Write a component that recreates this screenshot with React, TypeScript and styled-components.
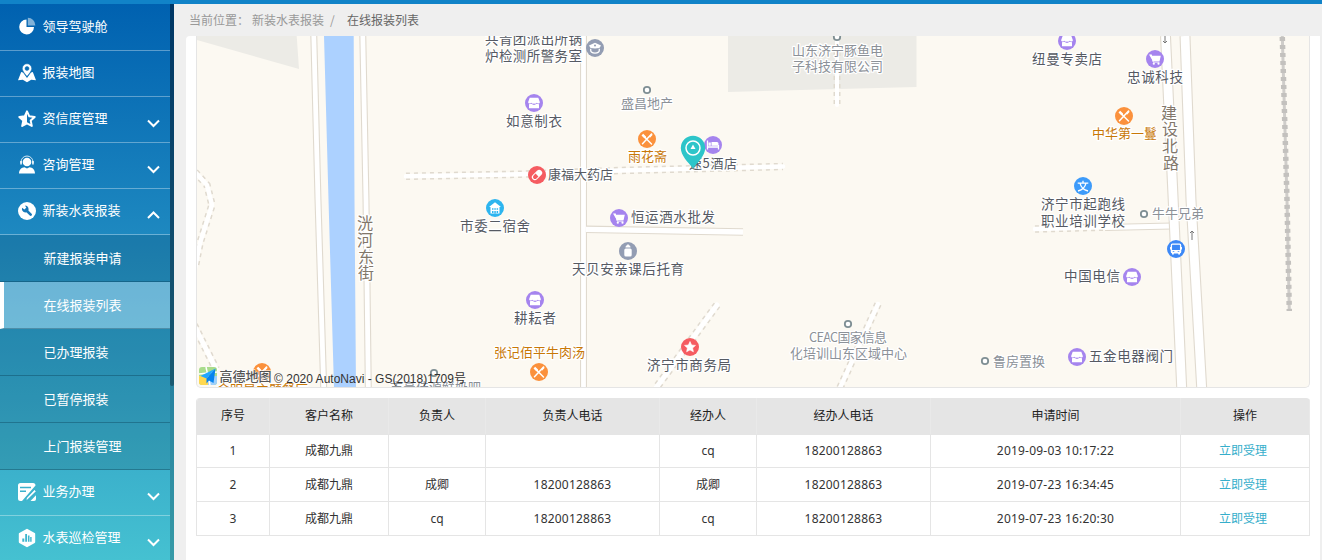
import React from 'react';
import styled, { createGlobalStyle, css } from 'styled-components';

const GlobalStyle = createGlobalStyle`
  * { box-sizing: border-box; }
  body {
    margin: 0;
    overflow: hidden;
    background: #efefef;
    font-family: "Noto Sans", "Noto Sans CJK SC", sans-serif;
    font-size: 12px;
    color: #333;
  }
`;

const Page = styled.div`
  display: flex;
  flex-direction: column;
  height: 560px;
  overflow: hidden;
`;
const TopBar = styled.div`
  flex: none;
  height: 4px;
  background: #1183c8;
`;
const Body = styled.div`
  flex: 1;
  display: flex;
  min-height: 0;
`;

/* ---------- sidebar ---------- */
const Sidebar = styled.aside`
  flex: none;
  width: 174px;
  display: flex;
  overflow: hidden;
  background: linear-gradient(#0061b0, #1e89c0 42%, #3cb2cc 85%, #45c1d1);
`;
const Menu = styled.nav`
  width: 170px;
  height: 560px;
  padding-top: 1px;
  font-family: "Noto Sans CJK SC", sans-serif;
  font-size: 13px;
  color: #fff;
`;
const Track = styled.div`
  width: 4px;
  background: rgba(0, 0, 0, 0.2);
`;
const Thumb = styled.div`
  height: 382px;
  border-radius: 0 0 2px 2px;
  background: rgba(0, 10, 20, 0.33);
`;
const MenuItem = styled.div`
  display: flex;
  align-items: center;
  height: 46px;
  padding: 0 10px 2px 17px;
  border-bottom: 1px solid rgba(255, 255, 255, 0.34);
`;
const MenuIcon = styled.svg`
  flex: none;
  width: 20px;
  height: 20px;
  margin-right: 5.5px;
`;
const MenuText = styled.span`
  flex: 1;
  line-height: 20px;
  padding-bottom: 2px;
  white-space: nowrap;
`;
const Chevron = styled.svg`
  width: 13px;
  height: 9px;
  margin-top: 10px;
`;
const SubItem = styled.div<{ $active?: boolean }>`
  height: 47px;
  padding-left: ${p => (p.$active ? 39.5 : 43.5)}px;
  line-height: 45px;
  background: rgba(0, 0, 0, 0.11);
  border-bottom: 1px solid rgba(0, 40, 60, 0.3);
  ${p =>
    p.$active &&
    css`
      background: rgba(255, 255, 255, 0.33);
      border-left: 4px solid #fff;
    `}
`;

/* ---------- content ---------- */
const Content = styled.main`
  flex: 1;
  display: flex;
  flex-direction: column;
  padding: 0 2px 0 12px;
`;
const Breadcrumb = styled.div`
  display: flex;
  flex: none;
  height: 32px;
  padding-left: 3px;
  line-height: 32px;
  color: #999;
  font-family: "Noto Sans CJK SC", sans-serif;
  white-space: nowrap;
`;
const Crumb = styled.span<{ $w: number; $dark?: boolean }>`
  width: ${p => p.$w}px;
  color: ${p => (p.$dark ? '#666' : '#999')};
`;
const Panel = styled.section`
  flex: 1;
  padding: 0 10px;
  background: #fff;
  border-radius: 4px 0 0 0;
`;
const MapBox = styled.div`
  height: 352px;
  overflow: hidden;
  border: 1px solid #e5e5e5;
  border-top: 0;
  border-radius: 0 0 5px 5px;
  background: #fcf9f2;
`;
const MapSvg = styled.svg`
  display: block;
  width: 1112px;
  height: 351px;
`;
const tones = { dark: '#565a63', grey: '#8c9198', food: '#c87807', road: '#82776a' };
type Tone = keyof typeof tones;
const MapLabel = styled.text<{ $tone: Tone; $size: number }>`
  font-family: "Noto Sans CJK SC", sans-serif;
  font-size: ${p => p.$size}px;
  fill: ${p => tones[p.$tone]};
  stroke: #fff;
  stroke-width: 2.5px;
  stroke-linejoin: round;
  paint-order: stroke;
`;
const Copyright = styled.text`
  font-family: "Liberation Sans", "Noto Sans CJK SC", sans-serif;
  font-size: 12px;
  fill: #333;
`;
const Brand = styled.text`
  font-family: "Noto Sans CJK SC", sans-serif;
  font-size: 13px;
  font-weight: 500;
  fill: #555;
  stroke: #fff;
  stroke-width: 1px;
  paint-order: stroke;
`;

/* ---------- table ---------- */
const Table = styled.div`
  margin-top: 10px;
  border-left: 1px solid #e5e5e5;
  border-radius: 4px 4px 0 0;
  overflow: hidden;
`;
const Row = styled.div<{ $head?: boolean }>`
  display: grid;
  grid-template-columns: 73px 119px 97px 174px 97px 174px 250px 129px;
  height: ${p => (p.$head ? 36 : 34)}px;
  line-height: ${p => (p.$head ? 36 : 33)}px;
  background: ${p => (p.$head ? '#e5e5e5' : '#fff')};
  color: ${p => (p.$head ? '#222' : '#333')};
`;
const Cell = styled.div<{ $head?: boolean; $num?: boolean }>`
  text-align: center;
  letter-spacing: ${p => (p.$num ? '0.21px' : '0')};
  border-right: 1px solid ${p => (p.$head ? '#e9e9e9' : '#e5e5e5')};
  border-bottom: 1px solid #e5e5e5;
`;
const Action = styled.a`
  margin-right: 4px;
  color: #35aecb;
`;

const icons: Record<string, React.ReactNode> = {
  pie: (
    <>
      <path d="M9.5 2.6A7.4 7.4 0 1 0 17 10L9.500 10z" fill="#fff" />
      <path d="M10.800 .8a7.800 7.800 0 0 1 7.600 7.700L10.800 8.500z" fill="#fff" opacity=".5" />
    </>
  ),
  map: (
    <>
      <path d="M4.200 9L1 17.200l4.800-.4 4.200 2.400 4.200-2.400 4.800.4L15.800 9 14 9.500 10 15 6 9.500z" fill="#fff" />
      <path fillRule="evenodd" d="M10 .8a4.700 4.700 0 0 1 4.700 4.700C14.700 8.400 10 13.300 10 13.300S5.300 8.400 5.300 5.500A4.700 4.700 0 0 1 10 .8zm0 2.700a2 2 0 1 0 0 4 2 2 0 0 0 0-4z" fill="#fff" stroke="#0b6cb4" strokeWidth=".5" />
    </>
  ),
  star: (
    <>
      <path d="M10 2.300l2.300 5 5.400.6-4 3.700 1.100 5.300L10 14.300l-4.800 2.600 1.100-5.300-4-3.700 5.400-.6z" fill="none" stroke="#fff" strokeWidth="2" strokeLinejoin="round" />
      <path d="M10 2v12.300l-4.800 2.600 1.100-5.300-4-3.700 5.400-.6z" fill="#fff" />
    </>
  ),
  agent: (
    <>
      <circle cx="10" cy="7" r="4.300" fill="#fff" />
      <path d="M4 8V7a6 6 0 0 1 12 0v1" fill="none" stroke="#fff" strokeWidth="1" opacity=".8" />
      <path d="M3.300 6h1.500v3.500H3.300zM15.200 6h1.500v3.500h-1.500zM2 18.500c0-4 2.500-6 5.500-6.300L10 13.500l2.500-1.300c3 .3 5.500 2.300 5.500 6.300z" fill="#fff" />
    </>
  ),
  wrench: (
    <>
      <circle cx="10" cy="10" r="9" fill="#fff" />
      <path d="M9 9l4.700 4.700" stroke="#1979b9" strokeWidth="2.600" strokeLinecap="round" />
      <path d="M5 6.800a3.600 3.600 0 0 0 5.500 4A3.600 3.600 0 0 0 8 4.600L9.300 6.800 7.500 8.400z" fill="#1979b9" />
    </>
  ),
  form: (
    <>
      <path d="M3.500 1h12.500a2.500 2.500 0 0 1 2.500 2.500L5 19H3.500A2.500 2.500 0 0 1 1 16.500v-13A2.500 2.500 0 0 1 3.500 1z" fill="#fff" />
      <path d="M3 5.500h11M3 9.200h6" stroke="#3cb0cc" strokeWidth="1.400" />
      <path d="M8.500 18.500l1-3 8-8.300 2 2.200-8.500 8.300z" fill="#fff" stroke="#3cb0cc" strokeWidth="1.100" />
      <path d="M13.500 19L19 13.200V17a2 2 0 0 1-2 2z" fill="#fff" />
    </>
  ),
  chart: (
    <>
      <path d="M10 1.800l7.200 4.100v8.200L10 18.200l-7.200-4.100V5.900z" fill="#fff" stroke="#fff" strokeWidth="2" strokeLinejoin="round" />
      <path d="M5.300 13.700V10.500h2v3.200zM8.200 13.700V6h1.800v7.700zM10.900 13.700V7.500h1.600v6.200zM13.200 13.700V9h1.400v4.700z" fill="#3fb6ce" />
    </>
  ),
};

const Item = ({ icon, text, arrow }: { icon: string; text: string; arrow?: 'up' | 'down' }) => (
  <MenuItem>
    <MenuIcon viewBox="0 0 20 20">{icons[icon]}</MenuIcon>
    <MenuText>{text}</MenuText>
    {arrow && (
      <Chevron viewBox="0 0 13 9">
        <path d={arrow === 'down' ? 'M1 1.500l5.500 5.500L12 1.500' : 'M1 7L6.500 1.500 12 7'} fill="none" stroke="#fff" strokeWidth="2" />
      </Chevron>
    )}
  </MenuItem>
);

const Road = ({ d, w, dashed }: { d: string; w: number; dashed?: boolean }) => (
  <g fill="none">
    <path d={d} stroke="#e0dacf" strokeWidth={w} strokeDasharray={dashed ? '4 4' : undefined} />
    <path d={d} stroke="#fff" strokeWidth={dashed ? w - 3 : w - 2.200} strokeLinecap={dashed ? 'round' : 'butt'} />
  </g>
);

type PoiKind = 'shop' | 'cart' | 'food' | 'bed' | 'pill' | 'house' | 'police' | 'bottle' | 'star' | 'school' | 'bus';
const poiColor: Record<PoiKind, string> = {
  shop: '#a584ee', cart: '#a584ee', bed: '#a584ee', food: '#fb913c', pill: '#f55c61', star: '#f55c61',
  house: '#2db5ef', police: '#939db3', bottle: '#939db3', school: '#3d9bfa', bus: '#3c88f6',
};
const glyphs: Record<PoiKind, React.ReactNode> = {
  shop: <><path d="M-4.300-5.200h8.600l1.600 4.400a1.700 1.700 0 0 1-3.100.6 2.600 2.600 0 0 1-2.800.8 2.600 2.600 0 0 1-2.800-.8 1.700 1.700 0 0 1-3.100-.6z" fill="#fff" /><path d="M-5 1.300l2-.6L0 1.900 3 .7l2 .6V5.200H-5z" fill="#fff" /></>,
  cart: <><path d="M-6-4.500h2.200l.5 1.200H5.800L4.600 2h-6.800z" fill="#fff" /><path d="M-3.800-4.500L-1.800 3H4.500" fill="none" stroke="#fff" strokeWidth="1" /><circle cx="-1.200" cy="4.700" r="1.100" fill="#fff" /><circle cx="3.500" cy="4.700" r="1.100" fill="#fff" /></>,
  food: <><path d="M-3.500-3L4.500 5M4.500-5L-4.500 4.700" stroke="#fff" strokeWidth="1.500" strokeLinecap="round" /><path d="M-5.500-3.500L-3.800-5.200-1-2.500-.8-.6-2.700-.8zM2-2.500L5-5.500 5.500-4 3-1.200z" fill="#fff" /></>,
  bed: <><path d="M-5.500-4.500v9M5.500 0v4.500M-5.500 2h11" stroke="#fff" strokeWidth="1.300" /><path d="M-1.500-3H4a1.500 1.500 0 0 1 1.500 1.500V.8h-7zM-4.500-2.500h2.300V.8h-2.300z" fill="#fff" /></>,
  pill: <g transform="rotate(-45)"><rect x="-6" y="-3" width="12" height="6" rx="3" fill="#fff" /><path d="M0-2v4h-2.800a2 2 0 0 1 0-4z" fill="#f55c61" /></g>,
  house: <><path d="M0-5.700L6-1H4.500V5.500h-9V-1H-6z" fill="#fff" /><path d="M-3 .2h1.500v1.500H-3zm2.300 0H.8v1.500H-.7zm2.300 0h1.500v1.500H1.600zM-3 3h1.500v2H-3zm2.300 0H.8v2.500H-.7zm2.300 0h1.500v2H1.600z" fill="#2db5ef" /></>,
  police: <><path d="M0-5.300l6 2.800-1.600 2.600a9 3 0 0 1-8.800 0L-6-2.500z" fill="#fff" /><path d="M-4.300.8v1.500a4.300 2.800 0 0 0 8.600 0V.8" fill="none" stroke="#fff" strokeWidth="1.300" /><circle cy="-2.400" r="1" fill="#939db3" /></>,
  bottle: <><rect x="-3.700" y="-2.500" width="7.400" height="8" rx="1.500" fill="#fff" /><path d="M-2.500-3.500a2.500 2.500 0 0 1 5 0zM-.8-6.500H.8v2H-.8z" fill="#fff" /></>,
  star: <path d="M0-5.500l1.600 3.500 3.900.4-2.900 2.600.8 3.800L0 2.900l-3.400 1.900.8-3.800-2.900-2.600 3.900-.4z" fill="#fff" stroke="#fff" strokeWidth=".6" strokeLinejoin="round" />,
  school: <path d="M0-5.300v2M-5.300-2.900H5.300M-3-2.900C-2 1.500 1 4 5 5M3-2.900C2 1.500-1 4-5 5" fill="none" stroke="#fff" strokeWidth="1.300" />,
  bus: <><rect x="-4.600" y="-4.800" width="9.200" height="8.600" rx="1" fill="none" stroke="#fff" strokeWidth="1.300" /><path d="M-4.600 1h9.200v3h-9.200zM-4 4h1.800v1.600H-4zM2.200 4H4v1.600H2.200zM-6-2h1v2.500h-1zM5-2h1v2.500H5z" fill="#fff" /><path d="M-3.300 2h1.600v.8h-1.600zM1.700 2h1.600v.8H1.700z" fill="#3c88f6" /></>,
};
const pois: [PoiKind, number, number][] = [
  ['police', 595, 48], ['shop', 534, 103], ['food', 647, 139], ['bed', 713, 145], ['pill', 537, 175],
  ['house', 495, 208], ['cart', 619, 218], ['bottle', 628, 251], ['shop', 535, 300], ['food', 539, 372],
  ['star', 690, 347], ['shop', 1067, 41], ['cart', 1155, 59], ['food', 1124, 116], ['school', 1083, 186],
  ['bus', 1176, 249], ['shop', 1132, 277], ['shop', 1077, 357], ['food', 262, 372],
];
const dots: [number, number][] = [[647, 90], [837, 37], [848, 324], [985, 361], [1144, 214], [434, 373]];
const labels: [string, number, number, number, Tone][] = [
  ['共青团派出所锅', 485, 44, 97, 'dark'],
  ['炉检测所警务室', 485, 61, 97, 'dark'],
  ['如意制衣', 506, 126, 56, 'dark'],
  ['盛昌地产', 621, 108, 52, 'grey'],
  ['雨花斋', 628, 161, 39, 'food'],
  ['速5酒店', 689, 168, 48, 'dark'],
  ['康福大药店', 548, 179, 65, 'dark'],
  ['市委二宿舍', 460, 231, 70, 'dark'],
  ['恒运酒水批发', 631, 222, 84, 'dark'],
  ['天贝安亲课后托育', 572, 274, 112, 'dark'],
  ['耕耘者', 514, 323, 42, 'dark'],
  ['张记佰平牛肉汤', 494, 357, 91, 'food'],
  ['济宁市商务局', 647, 370, 84, 'dark'],
  ['山东济宁豚鱼电', 792, 55, 91, 'grey'],
  ['子科技有限公司', 792, 71, 91, 'grey'],
  ['纽曼专卖店', 1032, 64, 70, 'dark'],
  ['忠诚科技', 1127, 82, 56, 'dark'],
  ['中华第一鬘', 1092, 138, 65, 'food'],
  ['济宁市起跑线', 1041, 209, 84, 'dark'],
  ['职业培训学校', 1041, 226, 84, 'dark'],
  ['牛牛兄弟', 1152, 218, 52, 'grey'],
  ['中国电信', 1064, 281, 56, 'dark'],
  ['五金电器阀门', 1089, 361, 84, 'dark'],
  ['鲁房置换', 993, 366, 52, 'grey'],
  ['CEAC国家信息', 809, 342, 78, 'grey'],
  ['化培训山东区域中心', 790, 358, 117, 'grey'],
  ['金明星主题餐厅', 217, 394, 91, 'food'],
  ['市豪佳源鲜奶吧', 390, 392, 91, 'grey'],
];
const roadNames: [string, number, number][] = [
  ['洸', 365, 229], ['河', 365, 246], ['东', 366, 263], ['街', 366, 279],
  ['建', 1169, 119], ['设', 1170, 135], ['北', 1170, 152], ['路', 1171, 169],
];

const CityMap = () => (
  <MapSvg viewBox="197 36 1112 351">
    <path d="M197 36h99.700L299 69 197 40z" fill="#ecebe6" />
    <path d="M728 36h188.500V87L728 92z" fill="#ecebe6" />
    <path d="M324 36h29.700L354.500 200 356 388H334L328.500 200z" fill="#acd1ff" />
    <Road d="M313.800 36L318 200 323.700 388" w={7} />
    <Road d="M362.800 36L366 200 368.300 388" w={7} />
    <Road d="M583.500 36V388" w={7} />
    <Road d="M586 229.300L743 232" w={7.500} />
    <Road d="M406 176.300L520 174.200 620 170.500 783 166.500" w={7.500} dashed />
    <path d="M583.500 160V190" stroke="#fff" strokeWidth="4.800" />
    <Road d="M717 305L656 388" w={8} dashed />
    <Road d="M878 304L839 390" w={7.500} dashed />
    <Road d="M195 172L207 185 212 205 200 243 195 268" w={7.500} dashed />
    <Road d="M194 325L216 369" w={8} dashed />
    <Road d="M837 36V105" w={7} dashed />
    <Road d="M1035 229L1110 227" w={7.500} dashed />
    <Road d="M1105 227.500L1172 226" w={7} />
    <Road d="M1165.500 36L1173.200 200 1181.700 388" w={11} />
    <Road d="M1185 36L1191 200 1201.700 388" w={11} />
    <g fill="none">
      <path d="M1282.300 36L1287 200 1289.300 311" stroke="#cfcdca" strokeWidth="3" />
      <path d="M1282.300 37L1287 200 1289.300 311" stroke="#c3c1be" strokeWidth="5.500" strokeDasharray="4 4" />
      <path d="M1165 36v7m-2-2l2 2 2-2M1192 240v-9m-2 2l2-2 2 2" stroke="#777" strokeWidth="1" />
    </g>
    {dots.map(([x, y]) => (
      <circle key={`${x}-${y}`} cx={x} cy={y} r="3.200" fill="#fff" stroke="#7f8f94" strokeWidth="1.800" />
    ))}
    {labels.map(([t, x, y, w, tone]) => (
      <MapLabel key={t} x={x} y={y} textLength={w} $tone={tone} $size={w / [...t].length > 13.500 ? 13.500 : 13}>
        {t}
      </MapLabel>
    ))}
    {roadNames.map(([t, x, y]) => (
      <MapLabel key={t} x={x} y={y} textAnchor="middle" $tone="road" $size={16}>
        {t}
      </MapLabel>
    ))}
    {pois.map(([kind, x, y]) => (
      <g key={`${x}-${y}`} transform={`translate(${x} ${y})`}>
        <circle r="9" fill={poiColor[kind]} />
        {glyphs[kind]}
      </g>
    ))}
    <path d="M693 168.500C688 162 680.800 155.500 680.800 148a12.200 12.200 0 0 1 24.400 0c0 7.500-7.200 14-12.200 20.500z" fill="#2dc5c9" />
    <circle cx="693" cy="148" r="7" fill="none" stroke="#fff" strokeWidth="1.500" />
    <path d="M693 144.500l2.500 4.500h-5z" fill="#fff" />
    <rect x="199" y="367" width="18" height="18" rx="3" fill="#a9dc8c" />
    <path d="M199 376h9v9h-6a3 3 0 0 1-3-3z" fill="#ffd84f" />
    <path d="M208 376h9v6a3 3 0 0 1-3 3h-6z" fill="#9fd0fb" />
    <path d="M206 367l4 18M199 374l18-2" stroke="#fff" strokeWidth="1.500" />
    <path d="M215.500 368.500L200.500 376l6 2.500z" fill="#22a7ff" />
    <path d="M215.500 368.500L206.500 378.500v5l2.500-3 4.500 2.500z" fill="#0583ef" />
    <Brand x="219.500" y="381" textLength="52">高德地图</Brand>
    <Copyright x="274" y="382.500" textLength="192">© 2020 AutoNavi - GS(2018)1709号</Copyright>
  </MapSvg>
);

const headers = ['序号', '客户名称', '负责人', '负责人电话', '经办人', '经办人电话', '申请时间', '操作'];
const rows = [
  ['1', '成都九鼎', '', '', 'cq', '18200128863', '2019-09-03 10:17:22'],
  ['2', '成都九鼎', '成卿', '18200128863', '成卿', '18200128863', '2019-07-23 16:34:45'],
  ['3', '成都九鼎', 'cq', '18200128863', 'cq', '18200128863', '2019-07-23 16:20:30'],
];

export default function App() {
  return (
    <>
      <GlobalStyle />
      <Page>
        <TopBar />
        <Body>
          <Sidebar>
            <Menu>
              <Item icon="pie" text="领导驾驶舱" />
              <Item icon="map" text="报装地图" />
              <Item icon="star" text="资信度管理" arrow="down" />
              <Item icon="agent" text="咨询管理" arrow="down" />
              <Item icon="wrench" text="新装水表报装" arrow="up" />
              <SubItem>新建报装申请</SubItem>
              <SubItem $active>在线报装列表</SubItem>
              <SubItem>已办理报装</SubItem>
              <SubItem>已暂停报装</SubItem>
              <SubItem>上门报装管理</SubItem>
              <Item icon="form" text="业务办理" arrow="down" />
              <Item icon="chart" text="水表巡检管理" arrow="down" />
            </Menu>
            <Track>
              <Thumb />
            </Track>
          </Sidebar>
          <Content>
            <Breadcrumb>
              <Crumb $w={63}>当前位置：</Crumb>
              <Crumb $w={78}>新装水表报装</Crumb>
              <Crumb $w={17}>/</Crumb>
              <Crumb $w={80} $dark>在线报装列表</Crumb>
            </Breadcrumb>
            <Panel>
              <MapBox>
                <CityMap />
              </MapBox>
              <Table>
                <Row $head>
                  {headers.map(h => (
                    <Cell key={h} $head>{h}</Cell>
                  ))}
                </Row>
                {rows.map(r => (
                  <Row key={r[0]}>
                    {r.map((c, i) => (
                      <Cell key={i} $num={/^\d/.test(c)}>{c}</Cell>
                    ))}
                    <Cell>
                      <Action>立即受理</Action>
                    </Cell>
                  </Row>
                ))}
              </Table>
            </Panel>
          </Content>
        </Body>
      </Page>
    </>
  );
}
